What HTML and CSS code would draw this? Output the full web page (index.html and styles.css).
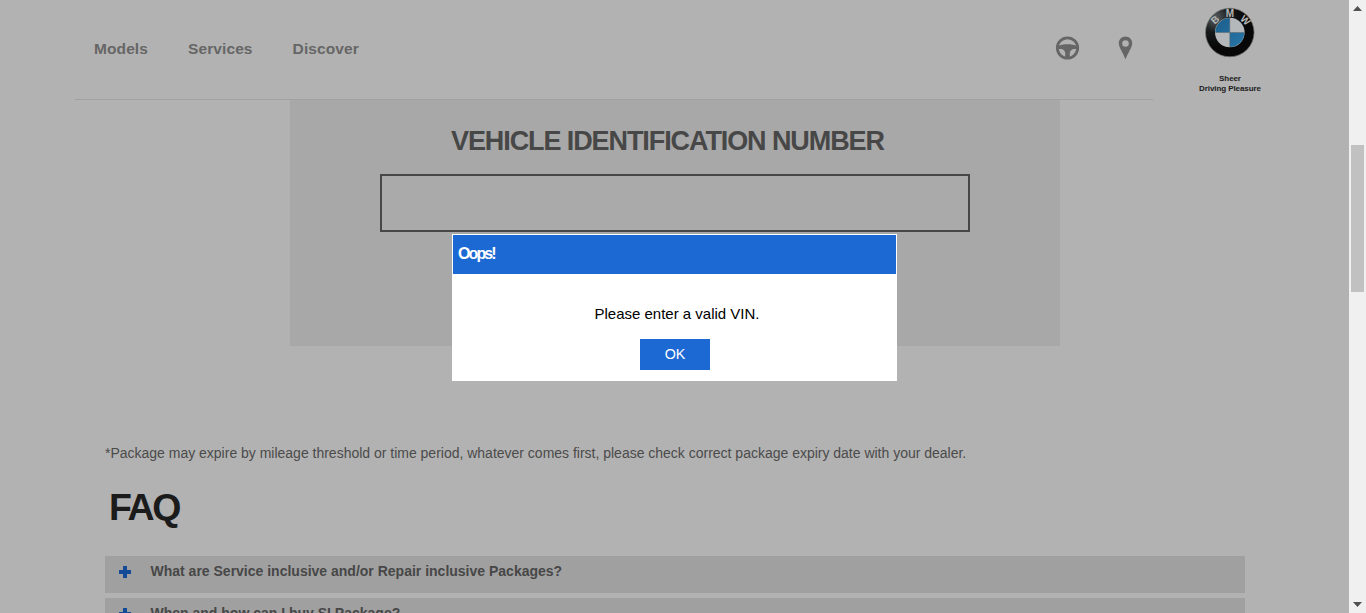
FILE: index.html
```html
<!DOCTYPE html>
<html lang="en">
<head>
<meta charset="utf-8">
<title>BMW Service Inclusive</title>
<link rel="stylesheet" href="styles.css">
</head>
<body>
<div class="page">
  <header class="header">
    <div class="bar">
      <nav class="nav"><a>Models</a><a>Services</a><a>Discover</a></nav>
      <div class="tools">
        <svg class="wheel" width="24" height="24" viewBox="0 0 24 24">
          <circle cx="11.500" cy="12" r="10.200" fill="none" stroke="#666" stroke-width="2.800"/>
          <path d="M1.700 10.200C6.500 7.600 16.500 7.600 21.300 10.200V13H17.500C15.500 13.400 14 15 13.800 17V22H9.200V17C9 15 7.500 13.400 5.500 13H1.700Z" fill="#666"/>
        </svg>
        <svg class="pin" width="14" height="24" viewBox="0 0 14 24">
          <path fill-rule="evenodd" d="M6.500 .5C2.700.5-.2 3.400-.2 7.200-.2 11.500 4 16.500 6.500 23.300 9 16.500 13.200 11.500 13.200 7.200 13.200 3.400 10.300.5 6.500 .5ZM6.500 4.200A3.300 3.300 0 1 1 6.500 10.800 3.300 3.300 0 0 1 6.500 4.200Z" fill="#666"/>
        </svg>
      </div>
    </div>
    <div class="brand">
      <svg width="52" height="52" viewBox="0 0 52 52">
        <defs>
          <radialGradient id="ring" cx=".2" cy=".2" r=".6"><stop offset="0" stop-color="#596063"/><stop offset=".5" stop-color="#171a1b"/><stop offset="1" stop-color="#080808"/></radialGradient>
          <linearGradient id="blue" x2="1" y2="1"><stop offset="0" stop-color="#1b5d8b"/><stop offset="1" stop-color="#2877a9"/></linearGradient>
        </defs>
        <circle cx="25.800" cy="25.500" r="24.300" fill="url(#ring)" stroke="#777" stroke-width=".7"/>
        <circle cx="25.800" cy="25.500" r="14.800" fill="#b4b8ba"/>
        <path d="M25.800 25.500V11A14.500 14.500 0 0 0 11.300 25.500ZM25.800 25.500V40A14.500 14.500 0 0 0 40.300 25.500Z" fill="url(#blue)"/>
        <path d="M25.800 11V40M11.300 25.500H40.300" stroke="#5f6669" stroke-width=".5"/>
        <g class="roundel">
          <text transform="translate(13.400 15.400) rotate(-42)">B</text>
          <text transform="translate(26 9.800)">M</text>
          <text transform="translate(38.900 15.900) rotate(44)">W</text>
        </g>
      </svg>
      <p class="tagline">Sheer<br>Driving Pleasure</p>
    </div>
  </header>
  <main>
    <section class="vin">
      <h2>VEHICLE IDENTIFICATION NUMBER</h2>
      <div class="field"></div>
    </section>
    <section class="content">
      <p class="note">*Package may expire by mileage threshold or time period, whatever comes first, please check correct package expiry date with your dealer.</p>
      <h1>FAQ</h1>
      <div class="faq">
        <div class="item"><svg class="plus" width="12" height="12" viewBox="0 0 12 12"><path d="M6 0V12M0 6H12" stroke="#134a97" stroke-width="4"/></svg><span>What are Service inclusive and/or Repair inclusive Packages?</span></div>
        <div class="item"><svg class="plus" width="12" height="12" viewBox="0 0 12 12"><path d="M6 0V12M0 6H12" stroke="#134a97" stroke-width="4"/></svg><span>When and how can I buy SI Package?</span></div>
      </div>
    </section>
  </main>
</div>
<aside class="scrollbar">
  <svg width="9" height="5" viewBox="0 0 9 5"><path d="M4.500 0L9 5H0Z" fill="#505050"/></svg>
  <div class="thumb"></div>
  <svg class="down" width="9" height="5" viewBox="0 0 9 5"><path d="M0 0H9L4.500 5Z" fill="#505050"/></svg>
</aside>
<div class="dialog">
  <div class="title">Oops!</div>
  <p class="message">Please enter a valid VIN.</p>
  <button class="ok">OK</button>
</div>
</body>
</html>
```
FILE: styles.css
```css
* { box-sizing: border-box; }
body { margin: 0; width: 1366px; height: 613px; overflow: hidden; display: flex; position: relative; background: #b2b2b2; font-family: "Liberation Sans", Arial, sans-serif; }
p, h1, h2 { margin: 0; }
.page { width: 1349px; height: 613px; overflow: hidden; }
.header { height: 100px; display: flex; padding-left: 75px; }
.bar { width: 1078px; border-bottom: 1px solid #a1a1a1; display: flex; justify-content: space-between; padding: 36px 20px 0 19px; }
.nav { display: flex; gap: 40px; height: 25px; align-items: center; color: #666; font-size: 15.5px; font-weight: bold; line-height: 25px; letter-spacing: .1px; }
.tools { display: flex; gap: 39px; height: 24px; align-items: center; }
.tools svg { overflow: visible; }
.brand { width: 154px; display: flex; flex-direction: column; align-items: center; padding-top: 7px; }
.roundel { font-family: "Liberation Sans", Arial, sans-serif; font-size: 10px; font-weight: bold; fill: #b4b6b7; text-anchor: middle; }
.tagline { margin-top: 15px; color: #1b1b1b; font-size: 8px; line-height: 10px; font-weight: bold; letter-spacing: -.08px; text-align: center; white-space: nowrap; }
.vin { width: 770px; height: 246px; margin-left: 290px; background: #a8a8a8; padding: 25px 90px 0; }
.vin h2 { font-size: 27px; line-height: 32px; color: #474747; letter-spacing: -1.09px; white-space: nowrap; padding-left: 71px; }
.field { height: 58px; margin-top: 17px; border: 2px solid #474747; background: #aaa; }
.content { width: 1140px; margin: 97px 0 0 105px; }
.note { font-size: 14px; line-height: 20px; color: #4b4b4b; white-space: nowrap; letter-spacing: -.007px; }
h1 { margin: 22px 0 0 4px; font-size: 37.5px; line-height: 44px; letter-spacing: -2.3px; color: #1b1b1b; }
.faq { display: flex; flex-direction: column; gap: 5px; margin-top: 27px; }
.item { height: 37px; background: #a0a0a0; display: flex; align-items: flex-start; gap: 19.5px; padding: 5px 0 0 14px; font-size: 14px; font-weight: bold; line-height: 20px; color: #474747; }
.plus { margin-top: 5px; }
.scrollbar { width: 17px; height: 613px; background: #f0f0f0; display: flex; flex-direction: column; align-items: center; padding-top: 6px; }
.scrollbar svg { flex: none; }
.thumb { width: 13px; height: 147px; margin-top: 134px; background: #c1c1c1; }
.down { margin-top: 310px; }
.dialog { position: absolute; left: 452px; top: 234px; width: 445px; height: 147px; padding: 1px; background: #fff; display: flex; flex-direction: column; align-items: center; }
.title { align-self: stretch; height: 39px; padding-left: 5px; background: #1c69d4; color: #fff; font-size: 16px; font-weight: bold; line-height: 37px; letter-spacing: -1.9px; }
.message { margin-top: 30px; padding-left: 5px; color: #000; font-size: 15px; line-height: 20px; }
.ok { width: 70px; height: 31px; margin-top: 15px; padding: 0 0 0 1px; border: 0; background: #1c69d4; color: #fff; font: 14.3px/31px "Liberation Sans", Arial, sans-serif; }
```
